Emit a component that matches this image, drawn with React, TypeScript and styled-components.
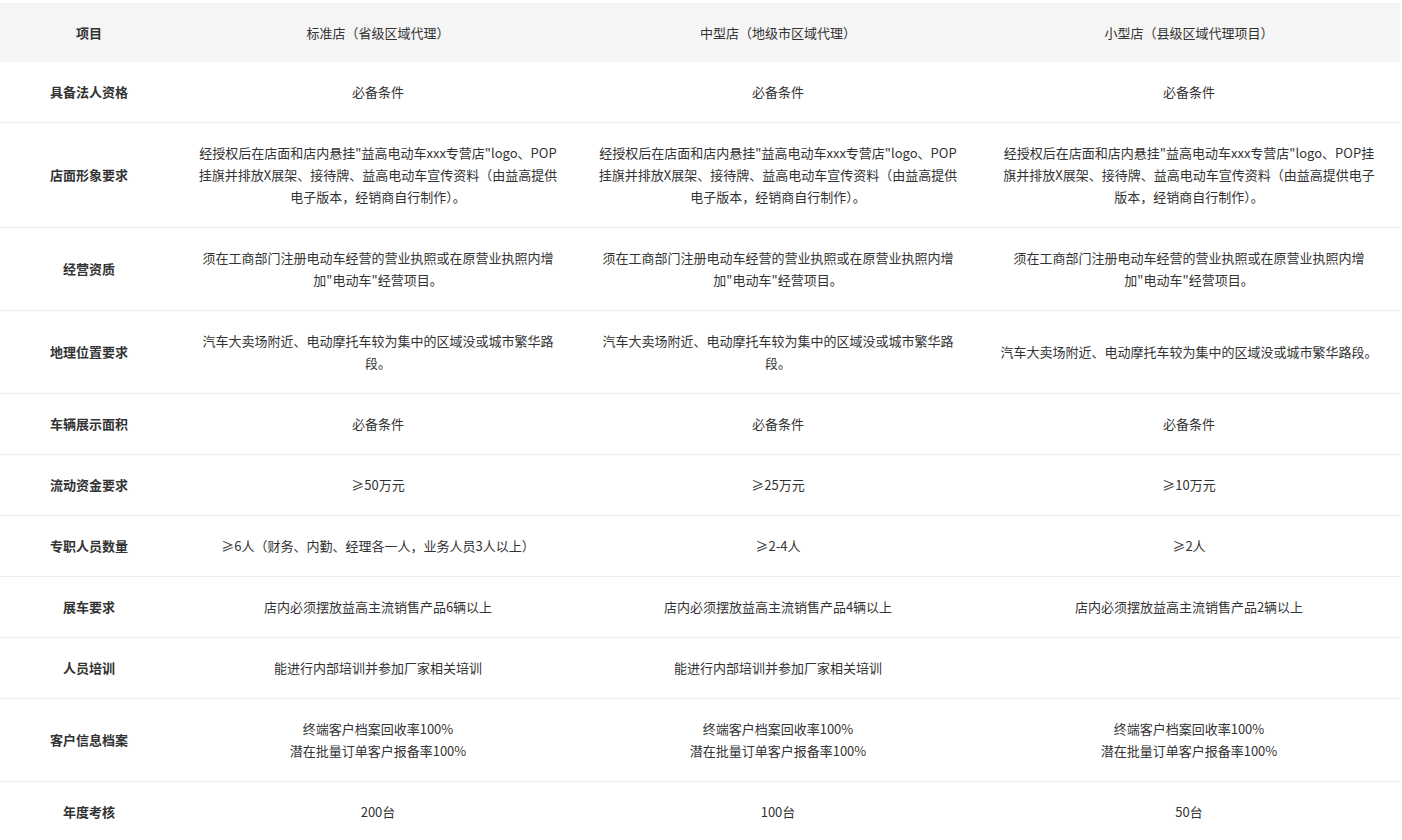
import React from "react";
import styled, { createGlobalStyle } from "styled-components";

const Global = createGlobalStyle`
  body {
    margin: 0;
    background: #fff;
    font-family: "Noto Sans CJK SC", "Noto Sans", sans-serif;
  }
`;

const Table = styled.table`
  margin-top: 3px;
  width: 1400px;
  border-collapse: collapse;
  table-layout: fixed;
  font-size: 13px;
  color: #333;
`;

const HeadCell = styled.th<{ $bold?: boolean }>`
  background: #f5f5f5;
  height: 59px;
  font-weight: ${(p) => (p.$bold ? 700 : 400)};
  text-align: center;
  padding: 0 20px;
`;

const Row = styled.tr`
  border-bottom: 1px solid #eeeeee;
`;

const Cell = styled.td<{ $bold?: boolean }>`
  padding: 19px 20px;
  line-height: 22px;
  text-align: center;
  font-weight: ${(p) => (p.$bold ? 700 : 400)};
  white-space: pre-line;
`;

const logo =
  '经授权后在店面和店内悬挂"益高电动车xxx专营店"logo、POP挂旗并排放X展架、接待牌、益高电动车宣传资料（由益高提供电子版本，经销商自行制作）。';
const biz = '须在工商部门注册电动车经营的营业执照或在原营业执照内增加"电动车"经营项目。';
const geo = "汽车大卖场附近、电动摩托车较为集中的区域没或城市繁华路段。";
const kh = "终端客户档案回收率100%\n潜在批量订单客户报备率100%";

const rows: [string, string, string, string][] = [
  ["具备法人资格", "必备条件", "必备条件", "必备条件"],
  ["店面形象要求", logo, logo, logo],
  ["经营资质", biz, biz, biz],
  ["地理位置要求", geo, geo, geo],
  ["车辆展示面积", "必备条件", "必备条件", "必备条件"],
  ["流动资金要求", "≥50万元", "≥25万元", "≥10万元"],
  ["专职人员数量", "≥6人（财务、内勤、经理各一人，业务人员3人以上）", "≥2-4人", "≥2人"],
  ["展车要求", "店内必须摆放益高主流销售产品6辆以上", "店内必须摆放益高主流销售产品4辆以上", "店内必须摆放益高主流销售产品2辆以上"],
  ["人员培训", "能进行内部培训并参加厂家相关培训", "能进行内部培训并参加厂家相关培训", ""],
  ["客户信息档案", kh, kh, kh],
  ["年度考核", "200台", "100台", "50台"],
];

export default function App() {
  return (
    <>
      <Global />
      <Table>
        <colgroup>
          <col style={{ width: 178 }} />
          <col style={{ width: 400 }} />
          <col style={{ width: 400 }} />
          <col style={{ width: 422 }} />
        </colgroup>
        <thead>
          <tr>
            <HeadCell $bold>项目</HeadCell>
            <HeadCell>标准店（省级区域代理）</HeadCell>
            <HeadCell>中型店（地级市区域代理）</HeadCell>
            <HeadCell>小型店（县级区域代理项目）</HeadCell>
          </tr>
        </thead>
        <tbody>
          {rows.map((r) => (
            <Row key={r[0]}>
              <Cell $bold>{r[0]}</Cell>
              <Cell>{r[1]}</Cell>
              <Cell>{r[2]}</Cell>
              <Cell>{r[3]}</Cell>
            </Row>
          ))}
        </tbody>
      </Table>
    </>
  );
}
